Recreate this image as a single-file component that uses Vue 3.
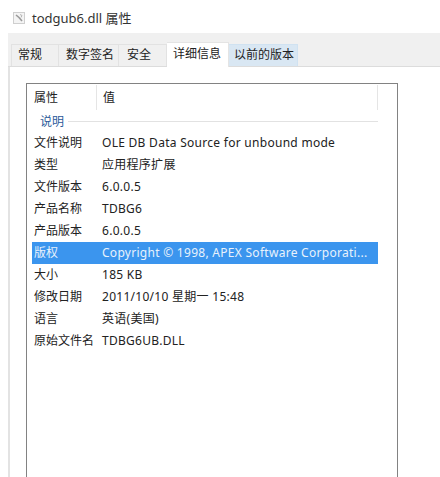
<script setup>
const rows = [
  ['文件说明', 'OLE DB Data Source for unbound mode'],
  ['类型', '应用程序扩展'],
  ['文件版本', '6.0.0.5'],
  ['产品名称', 'TDBG6'],
  ['产品版本', '6.0.0.5'],
  ['版权', 'Copyright © 1998, APEX Software Corporati...', true],
  ['大小', '185 KB'],
  ['修改日期', '2011/10/10 星期一 15:48'],
  ['语言', '英语(美国)'],
  ['原始文件名', 'TDBG6UB.DLL'],
]
const tabs = [
  { t: '常规', c: 'w1' },
  { t: '数字签名', c: 'w2' },
  { t: '安全', c: 'w3' },
  { t: '详细信息', c: 'w4 active' },
  { t: '以前的版本', c: 'w5 hover' },
]
</script>

<template>
  <div class="page">
    <div class="title">
      <svg class="icon" width="12" height="12" viewBox="0 0 12 12">
        <rect x="0.5" y="0.5" width="11" height="11" fill="#f4f4f4" stroke="#cfcfcf" />
        <path d="M3 3l3 2.5 3 3.5" stroke="#9a9a9a" stroke-width="1.6" fill="none" />
        <path d="M7 2.5l2 1-1 2" stroke="#b4b4b4" fill="none" />
      </svg>
      <span>todgub6.dll 属性</span>
    </div>
    <div class="sheet">
      <div class="tabs">
        <div v-for="tab in tabs" :key="tab.t" class="tab" :class="tab.c">{{ tab.t }}</div>
      </div>
      <div class="content">
        <div class="box">
          <div class="head">
            <div class="h1">属性</div>
            <div class="h2">值</div>
          </div>
          <div class="group"><span>说明</span><i></i></div>
          <div v-for="r in rows" :key="r[0]" class="row" :class="{ sel: r[2] }">
            <div class="k">{{ r[0] }}</div>
            <div class="v">{{ r[1] }}</div>
          </div>
        </div>
      </div>
    </div>
  </div>
</template>

<style>
html, body { margin: 0; background: #fff; }
</style>

<style scoped>
.page {
  width: 440px;
  height: 477px;
  overflow: hidden;
  background: #fff;
  font-family: "Noto Sans", "Noto Sans CJK SC", sans-serif;
  font-size: 12px;
  color: #222;
  display: flex;
  flex-direction: column;
}
.title {
  height: 33px;
  box-sizing: border-box;
  padding: 2px 0 0 13px;
  display: flex;
  align-items: center;
  gap: 7px;
  font-size: 13px;
  color: #333;
}
.sheet {
  flex: 1;
  margin-left: 8px;
  display: flex;
  flex-direction: column;
  min-height: 0;
}
.tabs {
  height: 34px;
  box-sizing: border-box;
  background: #f0f0f0;
  border-bottom: 1px solid #dcdcdc;
  display: flex;
  align-items: flex-end;
  padding-left: 3px;
}
.tab {
  height: 22px;
  box-sizing: border-box;
  line-height: 20px;
  border-top: 1px solid #e2e2e2;
  border-right: 1px solid #e2e2e2;
  font-size: 12px;
  white-space: nowrap;
}
.w1 { width: 48px; padding-left: 6px; border-left: 1px solid #e2e2e2; }
.w2 { width: 60px; padding-left: 7px; }
.w3 { width: 48px; padding-left: 8px; }
.w4 {
  width: 62px;
  height: 25px;
  line-height: 21px;
  margin-bottom: -1px;
  padding-left: 6px;
  background: #fff;
  border-color: #e4e4e4;
  position: relative;
}
.w5 {
  width: 69px;
  padding-left: 5px;
  background: #d9e7f3;
  border-color: #d0e2f1;
}
.content {
  flex: 1;
  min-height: 0;
  background: #fff;
  border-left: 2px solid #e3e3e3;
  padding: 16px 42px 0 16px;
}
.box {
  height: 420px;
  border: 1px solid #828282;
  border-bottom: 0;
  padding: 0 19px 0 5px;
}
.head {
  height: 25px;
  display: flex;
  align-items: center;
  margin-top: 1px;
}
.h1 {
  width: 65px;
  box-sizing: border-box;
  padding-left: 2px;
  height: 100%;
  line-height: 25px;
  border-right: 1px solid #e5e5e5;
}
.h2 {
  flex: 1;
  padding-left: 6px;
  height: 100%;
  line-height: 25px;
  border-right: 1px solid #e5e5e5;
}
.group {
  height: 22px;
  display: flex;
  align-items: center;
  padding-left: 8px;
  gap: 4px;
  color: #2b5a9a;
}
.group i {
  flex: 1;
  height: 1px;
  background: #e2e2e2;
}
.row {
  height: 22px;
  line-height: 22px;
  display: flex;
  white-space: nowrap;
}
.k {
  width: 70px;
  padding-left: 2px;
  box-sizing: border-box;
}
.v {
  letter-spacing: 0.28px;
}
.sel {
  background: #3b95ee;
  color: #e8f2fc;
}
</style>
